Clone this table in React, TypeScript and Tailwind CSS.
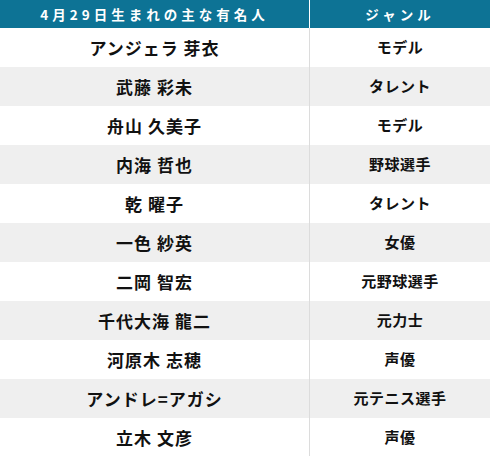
const rows: [string, string][] = [
  ["アンジェラ 芽衣", "モデル"],
  ["武藤 彩未", "タレント"],
  ["舟山 久美子", "モデル"],
  ["内海 哲也", "野球選手"],
  ["乾 曜子", "タレント"],
  ["一色 紗英", "女優"],
  ["二岡 智宏", "元野球選手"],
  ["千代大海 龍二", "元力士"],
  ["河原木 志穂", "声優"],
  ["アンドレ=アガシ", "元テニス選手"],
  ["立木 文彦", "声優"],
];

export default function App() {
  return (
    <div
      className="w-[490px] h-[456px] overflow-hidden bg-white text-[#111]"
      style={{ fontFamily: '"Noto Sans CJK JP", "Noto Sans", sans-serif' }}
    >
      <div className="grid grid-cols-[310px_1fr] h-[28px] bg-[#0d7395] text-white text-[13.5px] font-bold tracking-[4px]">
        <div className="flex items-center justify-center border-r border-white">4月29日生まれの主な有名人</div>
        <div className="flex items-center justify-center">ジャンル</div>
      </div>
      {rows.map(([name, genre], i) => (
        <div
          key={name}
          className={`grid grid-cols-[310px_1fr] h-[39px] ${i % 2 === 1 ? "bg-[#efefef]" : "bg-white"}`}
        >
          <div className="flex items-center justify-center border-r border-[#dcdcdc] text-[17px] font-bold tracking-[1px] whitespace-pre">
            {name}
          </div>
          <div className="flex items-center justify-center text-[15px] font-bold tracking-[0.5px]">{genre}</div>
        </div>
      ))}
    </div>
  );
}
